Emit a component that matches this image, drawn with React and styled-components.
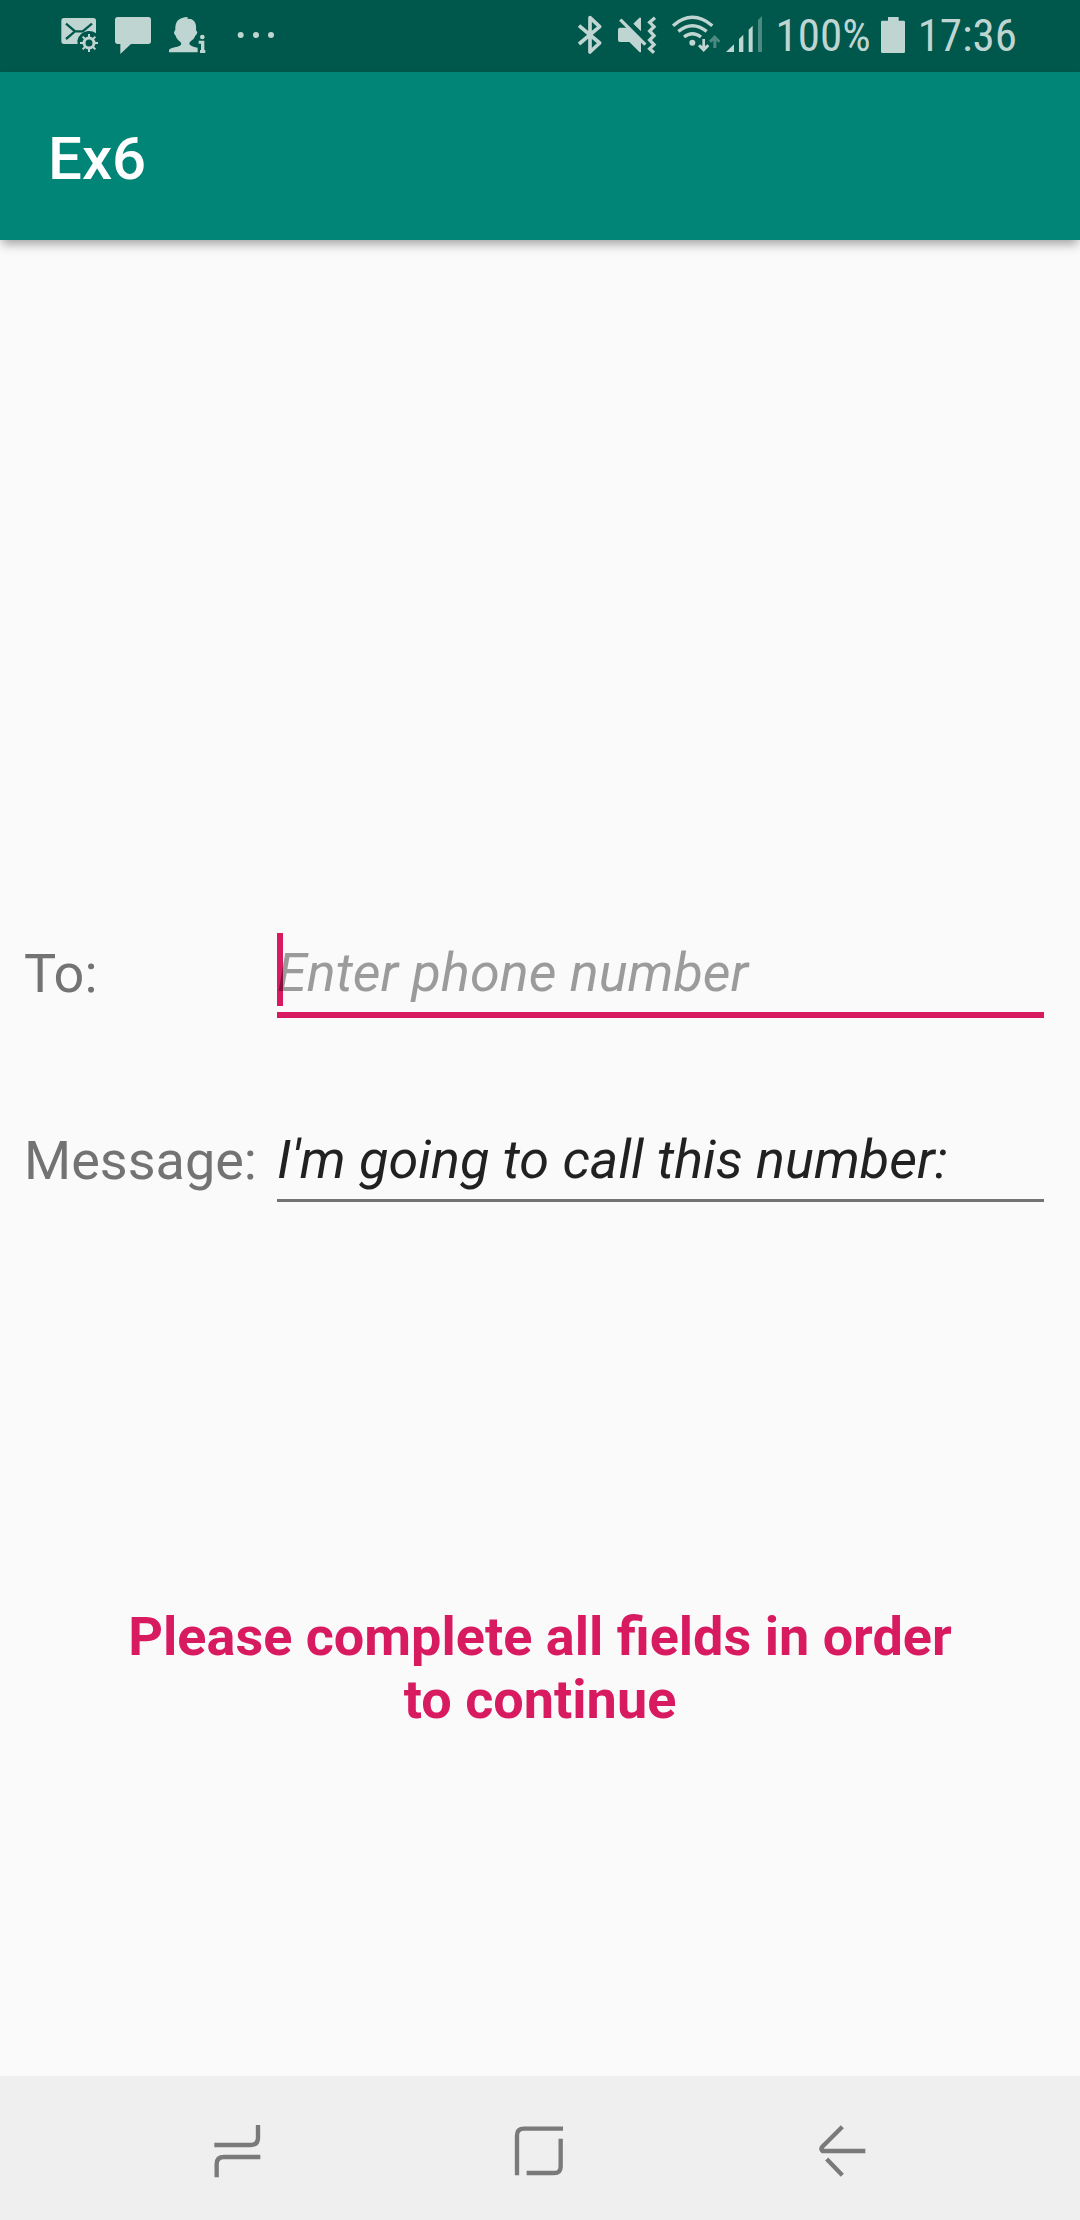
import React, { useState } from "react";
import styled, { createGlobalStyle } from "styled-components";

const colors = {
  primary: "#008577",
  primaryDark: "#00574b",
  accent: "#d81b60",
  surface: "#fafafa",
  nav: "#efefef",
  navIcon: "#7a7a7a",
  status: "#bfd5d2",
  statusDim: "#4d8a81",
  secondaryText: "#737373",
};

const GlobalStyle = createGlobalStyle`
  *, *::before, *::after { box-sizing: border-box; }
  body {
    margin: 0;
    background: ${colors.surface};
    font-family: Roboto, "Noto Sans", sans-serif;
  }
`;

const Screen = styled.div`
  min-height: 100vh;
  display: flex;
  flex-direction: column;
`;

const StatusBar = styled.div`
  height: 72px;
  padding: 0 63px 0 56px;
  display: flex;
  align-items: center;
  justify-content: space-between;
  background: ${colors.primaryDark};
  color: ${colors.status};
`;

const StatusGroup = styled.div`
  display: flex;
  align-items: center;
  gap: ${(p) => p.$gap || 0}px;
`;

const StatusIcon = styled.svg`
  display: block;
  flex: none;
  width: ${(p) => p.$width}px;
  height: 40px;
  margin-bottom: 2px;
  fill: currentColor;
`;

const StatusText = styled.span`
  font-family: "Roboto Condensed", "Liberation Sans Narrow", Roboto, sans-serif;
  font-size: 45px;
  line-height: 72px;
  white-space: nowrap;
`;

const AppBar = styled.header`
  height: 168px;
  padding: 6px 48px 0;
  display: flex;
  align-items: center;
  background: ${colors.primary};
  box-shadow: 0 6px 10px -2px rgba(0, 0, 0, 0.36);
`;

const Title = styled.h1`
  margin: 0;
  font-size: 60px;
  line-height: 70px;
  font-weight: 500;
  color: #fff;
`;

const Main = styled.main`
  flex: 1;
  padding: 693px 0 48px;
`;

const Form = styled.form`
  display: grid;
  gap: 102px;
  padding: 0 36px 0 24px;
`;

const FormRow = styled.div`
  display: grid;
  grid-template-columns: 253px 1fr;
  align-items: start;
`;

const Label = styled.label`
  padding-top: 5px;
  font-size: 54px;
  line-height: 72px;
  color: ${colors.secondaryText};
`;

const Field = styled.div`
  position: relative;
  border-bottom: ${(p) =>
    p.$active ? `6px solid ${colors.accent}` : `3px solid ${colors.secondaryText}`};
`;

const Cursor = styled.span`
  position: absolute;
  top: 0;
  left: 0;
  width: 6px;
  height: 73px;
  background: ${colors.accent};
`;

const Input = styled.input`
  position: relative;
  display: block;
  width: 100%;
  height: 79px;
  margin: 0;
  padding: 3px 0 4px;
  border: 0;
  outline: 0;
  background: transparent;
  font: italic 400 54px/72px Roboto, "Noto Sans", sans-serif;
  color: rgba(0, 0, 0, 0.87);
  caret-color: transparent;

  &::placeholder {
    color: rgba(0, 0, 0, 0.38);
    opacity: 1;
  }
`;

const Warning = styled.p`
  margin: 403px 0 0;
  padding: 0 120px;
  font-size: 54px;
  line-height: 63px;
  font-weight: 700;
  text-align: center;
  color: ${colors.accent};
`;

const NavBar = styled.nav`
  height: 144px;
  padding: 0 87px;
  display: flex;
  background: ${colors.nav};
`;

const NavButton = styled.button`
  flex: 1;
  display: flex;
  align-items: center;
  justify-content: center;
  padding: 0;
  border: 0;
  background: transparent;
  color: ${colors.navIcon};
`;

const NavIcon = styled.svg`
  width: 60px;
  height: 60px;
  fill: none;
  stroke: currentColor;
  stroke-width: 13;
`;

const gearTeeth = [0, 45, 90, 135, 180, 225, 270, 315];

function MailSettingsIcon() {
  return (
    <StatusIcon $width={50} viewBox="48 45 150 120" aria-hidden="true">
      <path d="M72 54H160Q168 54 168 62V100Q158 92 144 93Q118 96 112 122L113 132H72Q64 132 64 124V62Q64 54 72 54Z" />
      <path
        d="M78 71L105 94L78 117M156 71L128 94H105"
        fill="none"
        stroke={colors.primaryDark}
        strokeWidth="7"
      />
      <circle cx="147" cy="129" r="15" fill="none" stroke="currentColor" strokeWidth="9" />
      {gearTeeth.map((a) => (
        <rect key={a} x="144" y="102" width="6" height="10" transform={`rotate(${a} 147 129)`} />
      ))}
    </StatusIcon>
  );
}

function ChatIcon() {
  return (
    <StatusIcon $width={54} viewBox="198 45 162 120" aria-hidden="true">
      <path d="M233 51H325Q333 51 333 59V124Q333 132 325 132H273L241 162V132H233Q225 132 225 124V59Q225 51 233 51Z" />
    </StatusIcon>
  );
}

function ContactInfoIcon() {
  return (
    <StatusIcon $width={62} viewBox="360 45 186 120" aria-hidden="true">
      <path d="M387 157V149Q392 144 404 142Q422 139 424 132Q423 126 415 121Q409 116 407 107Q402 104 402 97L406 89Q405 70 414 61Q424 52 443 51L442 56Q456 55 462 63Q470 73 468 90L472 97Q471 104 466 107Q463 116 453 123Q447 128 448 132Q450 139 473 143V157Z" />
      <circle cx="487" cy="111" r="7" />
      <path d="M476 122H493V150H496V159H480V150H483V131H476Z" />
    </StatusIcon>
  );
}

function MoreIcon() {
  return (
    <StatusIcon $width={68} viewBox="546 45 204 120" aria-hidden="true">
      <circle cx="602" cy="105" r="9" />
      <circle cx="648" cy="105" r="9" />
      <circle cx="693" cy="105" r="9" />
    </StatusIcon>
  );
}

function BluetoothIcon() {
  return (
    <StatusIcon $width={36} viewBox="36 45 108 120" aria-hidden="true">
      <path
        d="M54 77L116 129L87 156V53L116 80L54 132"
        fill="none"
        stroke="currentColor"
        strokeWidth="11"
        strokeLinejoin="round"
      />
    </StatusIcon>
  );
}

function MuteVibrateIcon() {
  return (
    <StatusIcon $width={56} viewBox="144 45 168 120" aria-hidden="true">
      <path d="M177 83H200L240 121V157H236L205 126H177Q171 126 171 120V89Q171 83 177 83Z" />
      <path d="M217 71L235 53H240V94Z" />
      <path d="M184 55L258 130" fill="none" stroke={colors.primaryDark} strokeWidth="8" />
      <path d="M178 59L253 134" fill="none" stroke="currentColor" strokeWidth="10" />
      <path
        d="M282 53L266 67L279 80L266 93L279 107L266 120L279 134L266 146L279 158"
        fill="none"
        stroke="currentColor"
        strokeWidth="10"
      />
    </StatusIcon>
  );
}

function WifiIcon() {
  return (
    <StatusIcon $width={58} viewBox="312 45 174 120" aria-hidden="true">
      <g fill="none" stroke="currentColor" strokeWidth="10">
        <path d="M336 77Q394 27 454 77" />
        <path d="M352 94Q394 60 437 94" />
        <path d="M369 111Q394 91 420 111" />
      </g>
      <circle cx="394" cy="128" r="9" />
      <path d="M424 117H432V138L440 133L445 139L428 156L411 139L417 133L424 138Z" />
      <path
        d="M457 144H466V122L473 128L478 122L461 105L444 122L450 128L457 122Z"
        fill={colors.statusDim}
      />
    </StatusIcon>
  );
}

function SignalIcon() {
  return (
    <StatusIcon $width={45} viewBox="486 45 135 120" aria-hidden="true">
      <path d="M495 156L519 133V156Z" />
      <path d="M534 117L547 104V156H534Z" />
      <path d="M563 89L575 77V156H563Z" />
      <path d="M591 60L603 48V156H591Z" fill={colors.statusDim} />
    </StatusIcon>
  );
}

function BatteryIcon() {
  return (
    <StatusIcon $width={31} viewBox="357 45 93 120" aria-hidden="true">
      <path d="M384 51H416V62H431Q435 62 435 66V155Q435 159 431 159H367Q363 159 363 155V66Q363 62 367 62H384Z" />
    </StatusIcon>
  );
}

export default function App() {
  const [phone, setPhone] = useState("");
  const [message, setMessage] = useState("I'm going to call this number:");

  return (
    <Screen>
      <GlobalStyle />
      <StatusBar>
        <StatusGroup>
          <MailSettingsIcon />
          <ChatIcon />
          <ContactInfoIcon />
          <MoreIcon />
        </StatusGroup>
        <StatusGroup $gap={8}>
          <StatusGroup>
            <BluetoothIcon />
            <MuteVibrateIcon />
            <WifiIcon />
            <SignalIcon />
          </StatusGroup>
          <StatusText>100%</StatusText>
          <BatteryIcon />
          <StatusText>17:36</StatusText>
        </StatusGroup>
      </StatusBar>
      <AppBar>
        <Title>Ex6</Title>
      </AppBar>
      <Main>
        <Form onSubmit={(e) => e.preventDefault()}>
          <FormRow>
            <Label htmlFor="phone">To:</Label>
            <Field $active>
              <Cursor />
              <Input
                id="phone"
                type="tel"
                placeholder="Enter phone number"
                value={phone}
                onChange={(e) => setPhone(e.target.value)}
              />
            </Field>
          </FormRow>
          <FormRow>
            <Label htmlFor="message">Message:</Label>
            <Field>
              <Input
                id="message"
                type="text"
                value={message}
                onChange={(e) => setMessage(e.target.value)}
              />
            </Field>
          </FormRow>
        </Form>
        <Warning>Please complete all fields in order to continue</Warning>
      </Main>
      <NavBar>
        <NavButton type="button" aria-label="Recent apps">
          <NavIcon viewBox="84 174 180 180">
            <path d="M103 255H212Q234 255 234 234V195M241 291H132Q110 291 110 312V352" />
          </NavIcon>
        </NavButton>
        <NavButton type="button" aria-label="Home">
          <NavIcon viewBox="990 174 180 180">
            <path d="M1149 206H1032Q1011 206 1011 226V346M1142 236V320Q1142 339 1122 339H1040" />
          </NavIcon>
        </NavButton>
        <NavButton type="button" aria-label="Back">
          <NavIcon viewBox="96 174 180 180">
            <path d="M187 200L127 260Q121 267 128 273H256M140 297L187 346" />
          </NavIcon>
        </NavButton>
      </NavBar>
    </Screen>
  );
}
